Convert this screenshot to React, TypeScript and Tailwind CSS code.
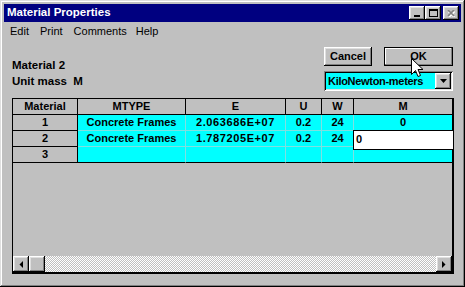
import { ReactNode } from "react";

// Win95 style bevels
const raised =
  "shadow-[inset_-1px_-1px_0_#000,inset_1px_1px_0_#fff,inset_-2px_-2px_0_#808080,inset_2px_2px_0_#dfdfdf]";
const sunken =
  "shadow-[inset_1px_1px_0_#808080,inset_-1px_-1px_0_#fff,inset_2px_2px_0_#000,inset_-2px_-2px_0_#dfdfdf]";

const cols = ["w-[65px]", "w-[108px]", "w-[100px]", "w-[36px]", "w-[32px]", "w-[98px]"];

const rows = [
  { id: "1", mtype: "Concrete Frames", e: "2.063686E+07", u: "0.2", w: "24", m: "0" },
  { id: "2", mtype: "Concrete Frames", e: "1.787205E+07", u: "0.2", w: "24", m: "" },
  { id: "3", mtype: "", e: "", u: "", w: "", m: "" },
];

function TitleButton({ children }: { children: ReactNode }) {
  return (
    <div className={`w-[16px] h-[14px] bg-[#c0c0c0] flex items-center justify-center ${raised}`}>
      {children}
    </div>
  );
}

function ArrowButton({ dir }: { dir: "left" | "right" }) {
  return (
    <div className={`w-[16px] h-[16px] bg-[#c0c0c0] flex items-center justify-center shrink-0 ${raised}`}>
      <svg width="4" height="7" viewBox="0 0 4 7">
        {dir === "left" ? <path d="M4 0 L4 7 L0.5 3.5 Z" fill="#000" /> : <path d="M0 0 L0 7 L3.5 3.5 Z" fill="#000" />}
      </svg>
    </div>
  );
}

export default function App() {
  return (
    <div
      className="w-[465px] h-[287px] bg-[#c0c0c0] p-[2px] shadow-[inset_-1px_-1px_0_#000,inset_1px_1px_0_#dfdfdf,inset_-2px_-2px_0_#808080,inset_2px_2px_0_#fff] overflow-hidden relative"
      style={{ fontFamily: '"Liberation Sans", Arial, sans-serif' }}
    >
      <div className="p-[2px] h-full flex flex-col">
        {/* Title bar */}
        <div className="h-[18px] bg-[#000080] flex items-center justify-between pl-[3px] pr-[2px] shrink-0">
          <span className="text-white font-bold text-[11.5px] leading-none">Material Properties</span>
          <div className="flex items-center">
            <TitleButton>
              <div className="w-[6px] h-[2px] bg-black mt-[6px] mr-[1px]" />
            </TitleButton>
            <TitleButton>
              <div className="w-[9px] h-[8px] border border-black border-t-2" />
            </TitleButton>
            <div className="w-[2px]" />
            <TitleButton>
              <svg width="8" height="7" viewBox="0 0 8 7">
                <path d="M1 1 L7 7 M7 1 L1 7" stroke="#fff" strokeWidth="1.6" transform="translate(0.6 0.6)" />
                <path d="M1 0 L7 6 M7 0 L1 6" stroke="#808080" strokeWidth="1.6" />
              </svg>
            </TitleButton>
          </div>
        </div>

        {/* Menu bar */}
        <div className="h-[18px] flex items-center pl-[6px] gap-[11px] text-[11px] text-black shrink-0">
          <span>Edit</span>
          <span>Print</span>
          <span>Comments</span>
          <span className="-ml-[2px]">Help</span>
        </div>

        {/* Content */}
        <div className="px-[8px] pt-[7px] flex-1">
          <div className="flex justify-between h-[51px]">
            <div className="pt-[10px] font-bold text-[11.5px] leading-[16px] text-black">
              <div>Material 2</div>
              <div>Unit mass&nbsp;&nbsp;M</div>
            </div>
            <div className="w-[129px] flex flex-col">
              <div className="flex justify-between">
                <button className={`w-[48px] h-[19px] bg-[#c0c0c0] text-[11px] font-bold text-black ${raised}`}>
                  Cancel
                </button>
                <button className="w-[69px] h-[19px] bg-[#c0c0c0] text-[11px] font-bold text-black border border-black shadow-[inset_-1px_-1px_0_#808080,inset_1px_1px_0_#fff]">
                  OK
                </button>
              </div>
              <div className={`mt-[5px] h-[20px] bg-[#00ffff] flex items-center p-[2px] ${sunken}`}>
                <span className="flex-1 pl-[2px] text-[11px] font-bold text-black tracking-[-0.3px] whitespace-nowrap overflow-hidden">
                  KiloNewton-meters
                </span>
                <div className={`w-[16px] h-[16px] bg-[#c0c0c0] flex items-center justify-center shrink-0 ${raised}`}>
                  <svg width="7" height="4" viewBox="0 0 7 4">
                    <path d="M0 0 L7 0 L3.5 4 Z" fill="#000" />
                  </svg>
                </div>
              </div>
            </div>
          </div>

          {/* Grid */}
          <div className="relative w-[442px] h-[176px] border-l border-t border-r-2 border-b-2 border-black bg-[#c0c0c0] flex flex-col text-[11px] font-bold text-black">
            <div className="flex h-[16px] border-b border-black shrink-0">
              {["Material", "MTYPE", "E", "U", "W", "M"].map((h, i) => (
                <div
                  key={h}
                  className={`${cols[i]} h-[15px] leading-[15px] text-center ${i < 5 ? "border-r border-black" : ""}`}
                >
                  {h}
                </div>
              ))}
            </div>
            {rows.map((r, ri) => {
              const cells = [r.mtype, r.e, r.u, r.w, r.m];
              const last = ri === rows.length - 1;
              return (
                <div key={r.id} className="flex h-[16px] shrink-0">
                  <div className={`${cols[0]} h-[16px] leading-[15px] text-center border-r border-b border-black`}>{r.id}</div>
                  {cells.map((c, ci) => (
                    <div
                      key={ci}
                      className={`${cols[ci + 1]} h-[16px] leading-[15px] text-center bg-[#00ffff] border-b ${
                        last ? "border-b-black" : "border-b-[#80e0e0]"
                      } ${ci < 4 ? "border-r border-r-[#80e0e0]" : ""} ${ci === 1 ? "tracking-[0.6px]" : ""} whitespace-nowrap`}
                    >
                      {c}
                    </div>
                  ))}
                </div>
              );
            })}
            <div className="flex-1" />
            {/* Horizontal scrollbar */}
            <div className="flex h-[16px] shrink-0">
              <ArrowButton dir="left" />
              <div className={`w-[16px] h-[16px] bg-[#c0c0c0] shrink-0 ${raised}`} />
              <div className="flex-1 bg-[image:conic-gradient(#fff_90deg,#c0c0c0_90deg_180deg,#fff_180deg_270deg,#c0c0c0_270deg)] bg-[length:2px_2px]" />
              <ArrowButton dir="right" />
            </div>

            {/* In-place editor */}
            <div className="absolute left-[340px] top-[31px] w-[101px] h-[20px] bg-white border border-black pl-[2px] leading-[17px]">
              0
            </div>
          </div>
        </div>
      </div>

      {/* Mouse cursor */}
      <svg className="absolute left-[411px] top-[58px]" width="13" height="20" viewBox="0 0 13 20">
        <path d="M0.5 0.5 L0.5 16.5 L4.5 12.5 L7 18.5 L9.5 17.5 L7 11.5 L12 11.5 Z" fill="#fff" stroke="#000" strokeWidth="1" />
      </svg>
    </div>
  );
}
